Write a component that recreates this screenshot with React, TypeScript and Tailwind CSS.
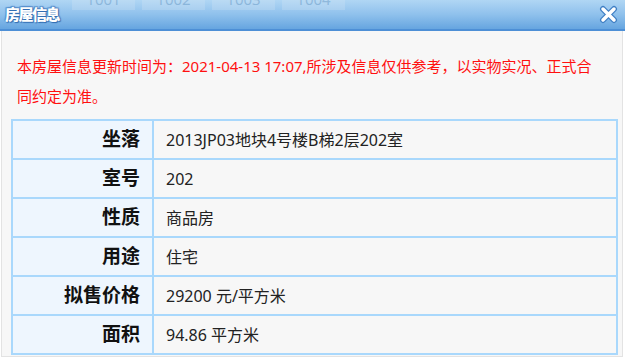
import React from 'react';

const rows: [string, string][] = [
  ['坐落', '2013JP03地块4号楼B梯2层202室'],
  ['室号', '202'],
  ['性质', '商品房'],
  ['用途', '住宅'],
  ['拟售价格', '29200 元/平方米'],
  ['面积', '94.86 平方米'],
];

const App: React.FC = () => {
  return (
    <div className="w-[625px] h-[360px] bg-white overflow-hidden" style={{ fontFamily: '"Noto Sans", "Noto Sans CJK SC", sans-serif' }}>
      {/* Title bar */}
      <div className="relative h-[31px] bg-gradient-to-b from-[#b0d6f4] via-[#8fc1ec] to-[#66a5e0] border-b-2 border-[#4d8fd6] flex items-center justify-between pl-[5px] pr-[7px] overflow-hidden">
        <div className="absolute left-[72px] top-[-10px] flex gap-[7px] opacity-25 text-[15px] text-[#3a6a99]">
          {['1001', '1002', '1003', '1004'].map((n) => (
            <div key={n} className="w-[63px] h-[20px] bg-[#dbe9f6] flex items-end justify-center">{n}</div>
          ))}
        </div>
        <span
          className="relative text-[15px] font-black text-white leading-none tracking-[-1.5px]"
          style={{ textShadow: '0 0 1px #2f6bb0, 1px 1px 1px #2f6bb0, -1px -1px 1px #5a92cf, 1px -1px 1px #5a92cf' }}
        >
          房屋信息
        </span>
        <svg className="relative" width="19" height="19" viewBox="0 0 19 19">
          <path d="M4 4 L15 15 M15 4 L4 15" stroke="#3f7fc4" strokeWidth="6" strokeLinecap="round" />
          <path d="M4 4 L15 15 M15 4 L4 15" stroke="#ffffff" strokeWidth="3.5" strokeLinecap="round" />
        </svg>
      </div>

      {/* Body */}
      <div className="ml-[1px] w-[622px] h-[326px] bg-[#f7f7f7] border-l border-b border-r border-[#e3e3e3] pt-[20px]">
        <p className="pl-[15px] pr-[24px] text-[15px] leading-[30px] text-[#ff1010]">
          本房屋信息更新时间为：2021-04-13 17:07,所涉及信息仅供参考，以实物实况、正式合同约定为准。
        </p>
        <table className="mt-[8px] ml-[9px] w-[607px] border-collapse border-2 border-[#a9d8fc]">
          <tbody>
            {rows.map(([k, v]) => (
              <tr key={k} className="h-[39px]">
                <td className="w-[141px] border-2 border-[#a9d8fc] bg-[#eef6fe] text-right pr-[12px] text-[19px] font-bold text-[#111]">{k}</td>
                <td className="border-2 border-[#a9d8fc] pl-[12px] text-[16px] text-[#222]">{v}</td>
              </tr>
            ))}
          </tbody>
        </table>
      </div>
    </div>
  );
};

export default App;
